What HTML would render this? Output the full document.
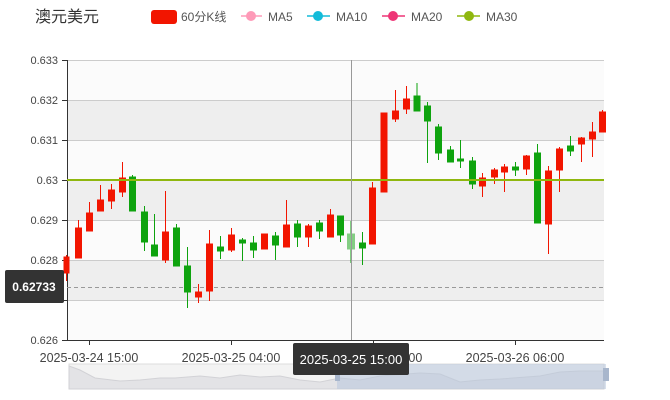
<!DOCTYPE html>
<html><head><meta charset="utf-8"><style>
body{margin:0;background:#fff;width:670px;height:400px;overflow:hidden;font-family:"Liberation Sans","Noto Sans CJK SC",sans-serif}
</style></head><body>
<svg width="670" height="400" xmlns="http://www.w3.org/2000/svg" style="position:absolute;left:0;top:0" font-family="Liberation Sans, Noto Sans CJK SC, sans-serif">
<text x="35" y="22" font-size="16" fill="#333" font-family="Noto Sans CJK SC, sans-serif">澳元美元</text>
<rect x="151" y="10" width="26" height="14" rx="3" fill="#f21500"/>
<text x="181" y="21" font-size="12" fill="#555">60分K线</text>
<line x1="241" y1="16" x2="262" y2="16" stroke="#fe9ab8" stroke-width="1.5"/><circle cx="251" cy="16" r="5" fill="#fe9ab8"/>
<text x="268" y="21" font-size="12" fill="#555">MA5</text>
<line x1="307" y1="16" x2="330" y2="16" stroke="#13bbd9" stroke-width="1.5"/><circle cx="318" cy="16" r="5" fill="#13bbd9"/>
<text x="336" y="21" font-size="12" fill="#555">MA10</text>
<line x1="382" y1="16" x2="405" y2="16" stroke="#ee3576" stroke-width="1.5"/><circle cx="393" cy="16" r="5" fill="#ee3576"/>
<text x="411" y="21" font-size="12" fill="#555">MA20</text>
<line x1="457" y1="16" x2="480" y2="16" stroke="#8fb70f" stroke-width="1.5"/><circle cx="469" cy="16" r="5" fill="#8fb70f"/>
<text x="486" y="21" font-size="12" fill="#555">MA30</text>

<rect x="67" y="60" width="537" height="40" fill="#fbfbfb"/>
<rect x="67" y="100" width="537" height="40" fill="#eeeeee"/>
<rect x="67" y="140" width="537" height="40" fill="#fbfbfb"/>
<rect x="67" y="180" width="537" height="40" fill="#eeeeee"/>
<rect x="67" y="220" width="537" height="40" fill="#fbfbfb"/>
<rect x="67" y="260" width="537" height="40" fill="#eeeeee"/>
<rect x="67" y="300" width="537" height="40" fill="#fbfbfb"/>
<g stroke="#cccccc" stroke-width="1">
<line x1="67" y1="60.5" x2="604" y2="60.5"/><line x1="67" y1="100.5" x2="604" y2="100.5"/><line x1="67" y1="140.5" x2="604" y2="140.5"/><line x1="67" y1="220.5" x2="604" y2="220.5"/><line x1="67" y1="260.5" x2="604" y2="260.5"/><line x1="67" y1="300.5" x2="604" y2="300.5"/>
</g>
<g font-size="11" fill="#444" text-anchor="end">
<text x="58" y="64">0.633</text><text x="58" y="104">0.632</text><text x="58" y="144">0.631</text><text x="58" y="184">0.63</text><text x="58" y="224">0.629</text><text x="58" y="264">0.628</text><text x="58" y="344">0.626</text>
</g>
<g stroke="#333" stroke-width="1">
<line x1="67.5" y1="60" x2="67.5" y2="340"/>
<line x1="67" y1="340.5" x2="604" y2="340.5"/>
<line x1="62" y1="60.5" x2="67" y2="60.5"/><line x1="62" y1="100.5" x2="67" y2="100.5"/><line x1="62" y1="140.5" x2="67" y2="140.5"/><line x1="62" y1="180.5" x2="67" y2="180.5"/><line x1="62" y1="220.5" x2="67" y2="220.5"/><line x1="62" y1="260.5" x2="67" y2="260.5"/><line x1="62" y1="300.5" x2="67" y2="300.5"/><line x1="62" y1="340.5" x2="67" y2="340.5"/>
<line x1="89.5" y1="340" x2="89.5" y2="345"/><line x1="231.5" y1="340" x2="231.5" y2="345"/><line x1="373.5" y1="340" x2="373.5" y2="345"/><line x1="515.5" y1="340" x2="515.5" y2="345"/>
</g>
<line x1="67" y1="287.5" x2="604" y2="287.5" stroke="#999" stroke-dasharray="4,3"/>

<g stroke-width="1">
<g fill="#f21500" stroke="#f21500">
<line x1="66.5" y1="255" x2="66.5" y2="281"/><rect x="64" y="257" width="5" height="16"/>
<line x1="78.5" y1="220" x2="78.5" y2="258"/><rect x="75.5" y="228" width="6" height="30"/>
<line x1="89.5" y1="202" x2="89.5" y2="231"/><rect x="86.5" y="213" width="6" height="18"/>
<line x1="100.5" y1="185" x2="100.5" y2="211"/><rect x="97.5" y="200" width="6" height="11"/>
<line x1="111.5" y1="184" x2="111.5" y2="209"/><rect x="108.5" y="190" width="6" height="11"/>
<line x1="122.5" y1="162" x2="122.5" y2="197"/><rect x="119.5" y="178" width="6" height="14"/>
<line x1="165.5" y1="191" x2="165.5" y2="263"/><rect x="162.5" y="232" width="6" height="28"/>
<line x1="198.5" y1="284" x2="198.5" y2="303"/><rect x="195.5" y="292" width="6" height="5"/>
<line x1="209.5" y1="230" x2="209.5" y2="301"/><rect x="206.5" y="244" width="6" height="47"/>
<line x1="231.5" y1="228" x2="231.5" y2="252"/><rect x="228.5" y="235" width="6" height="15"/>
<rect x="261.5" y="234" width="6" height="15"/>
<line x1="286.5" y1="200" x2="286.5" y2="247"/><rect x="283.5" y="225" width="6" height="22"/>
<line x1="308.5" y1="224" x2="308.5" y2="247"/><rect x="305.5" y="226" width="6" height="11"/>
<line x1="330.5" y1="209" x2="330.5" y2="237"/><rect x="327.5" y="215" width="6" height="22"/>
<line x1="372.5" y1="182" x2="372.5" y2="244"/><rect x="369.5" y="188" width="6" height="56"/>
<rect x="381" y="113" width="6" height="79"/>
<line x1="395.5" y1="90" x2="395.5" y2="122"/><rect x="392.5" y="111" width="6" height="8"/>
<line x1="406.5" y1="86" x2="406.5" y2="114"/><rect x="403.5" y="99" width="6" height="10"/>
<line x1="482.5" y1="173" x2="482.5" y2="197"/><rect x="479.5" y="178" width="6" height="8"/>
<line x1="494.5" y1="168" x2="494.5" y2="184"/><rect x="491.5" y="170" width="6" height="7"/>
<line x1="504.5" y1="164" x2="504.5" y2="192"/><rect x="501.5" y="167" width="6" height="5"/>
<line x1="526.5" y1="155" x2="526.5" y2="175"/><rect x="523.5" y="156" width="6" height="13"/>
<line x1="548.5" y1="166" x2="548.5" y2="254"/><rect x="545.5" y="171" width="6" height="53"/>
<line x1="559.5" y1="147" x2="559.5" y2="192"/><rect x="556.5" y="149" width="6" height="21"/>
<line x1="581.5" y1="137" x2="581.5" y2="162"/><rect x="578.5" y="138" width="6" height="6"/>
<line x1="592.5" y1="122" x2="592.5" y2="157"/><rect x="589.5" y="132" width="6" height="7"/>
<line x1="602.5" y1="110" x2="602.5" y2="132"/><rect x="599.5" y="112" width="6" height="20"/>
</g>
<g fill="#0ea30e" stroke="#0ea30e">
<line x1="132.5" y1="175" x2="132.5" y2="211"/><rect x="129.5" y="177" width="6" height="34"/>
<line x1="144.5" y1="206" x2="144.5" y2="251"/><rect x="141.5" y="212" width="6" height="30"/>
<line x1="154.5" y1="214" x2="154.5" y2="256"/><rect x="151.5" y="245" width="6" height="11"/>
<line x1="176.5" y1="224" x2="176.5" y2="266"/><rect x="173.5" y="228" width="6" height="38"/>
<line x1="187.5" y1="247" x2="187.5" y2="308"/><rect x="184.5" y="266" width="6" height="26"/>
<line x1="220.5" y1="236" x2="220.5" y2="259"/><rect x="217.5" y="247" width="6" height="4"/>
<line x1="242.5" y1="238" x2="242.5" y2="261"/><rect x="239.5" y="240" width="6" height="3"/>
<line x1="253.5" y1="236" x2="253.5" y2="258"/><rect x="250.5" y="243" width="6" height="7"/>
<line x1="275.5" y1="232" x2="275.5" y2="260"/><rect x="272.5" y="236" width="6" height="9"/>
<line x1="297.5" y1="220" x2="297.5" y2="247"/><rect x="294.5" y="224" width="6" height="13"/>
<line x1="319.5" y1="220" x2="319.5" y2="239"/><rect x="316.5" y="223" width="6" height="8"/>
<line x1="340.5" y1="216" x2="340.5" y2="242"/><rect x="337.5" y="216" width="6" height="19"/>
<g opacity="0.5"><line x1="350.5" y1="221" x2="350.5" y2="263"/><rect x="347.5" y="234" width="7" height="15"/></g>
<line x1="362.5" y1="232" x2="362.5" y2="265"/><rect x="359.5" y="243" width="6" height="5"/>
<rect x="414" y="96" width="6" height="15"/><line x1="417" y1="83" x2="417" y2="96"/>
<line x1="427.5" y1="102" x2="427.5" y2="163"/><rect x="424.5" y="106" width="6" height="15"/>
<line x1="438.5" y1="124" x2="438.5" y2="160"/><rect x="435.5" y="127" width="6" height="26"/>
<line x1="450.5" y1="146" x2="450.5" y2="162"/><rect x="447.5" y="150" width="6" height="12"/>
<line x1="460.5" y1="140" x2="460.5" y2="168"/><rect x="457.5" y="159" width="6" height="2"/>
<line x1="472.5" y1="157" x2="472.5" y2="189"/><rect x="469.5" y="161" width="6" height="23"/>
<line x1="515.5" y1="162" x2="515.5" y2="176"/><rect x="512.5" y="167" width="6" height="3"/>
<line x1="537.5" y1="144" x2="537.5" y2="223"/><rect x="534.5" y="153" width="6" height="70"/>
<line x1="570.5" y1="136" x2="570.5" y2="156"/><rect x="567.5" y="146" width="6" height="5"/>
</g>
</g>
<line x1="67" y1="180" x2="604" y2="180" stroke="#8fb70f" stroke-width="2"/>
<line x1="351.5" y1="60" x2="351.5" y2="340" stroke="#999" stroke-width="1"/>

<rect x="69" y="364" width="535" height="25" fill="#f3f3f3" stroke="#ddd"/>
<path d="M69 366 L80 370 L95 378 L120 381 L140 380 L160 378 L175 378 L200 376 L220 378 L240 375 L260 377 L280 376 L300 380 L320 382 L340 378 L360 380 L380 376 L420 373 L440 374 L460 382 L480 380 L500 379 L540 376 L560 372 L580 371 L604 371 L604 389 L69 389 Z" fill="#e3e3e6" stroke="#d2d2d6"/>
<rect x="337" y="364" width="269" height="25" fill="#b8c6dc" opacity="0.55"/>
<rect x="335" y="370" width="5" height="11" fill="#a8b6cc"/>
<rect x="603" y="368" width="6" height="13" fill="#a8b6cc"/>
<g font-size="12.5" fill="#444" text-anchor="middle">
<text x="89" y="362">2025-03-24 15:00</text><text x="231" y="362">2025-03-25 04:00</text><text x="373" y="362">2025-03-25 15:00</text><text x="515" y="362">2025-03-26 06:00</text>
</g>
<rect x="293" y="343" width="116" height="32" rx="2" fill="#333"/>
<text x="351" y="364" font-size="13" fill="#fff" text-anchor="middle">2025-03-25 15:00</text>
<rect x="5" y="270" width="59" height="33" rx="2" fill="#333"/>
<text x="34" y="291" font-size="12" font-weight="bold" fill="#fff" text-anchor="middle">0.62733</text>
</svg>
</body></html>
